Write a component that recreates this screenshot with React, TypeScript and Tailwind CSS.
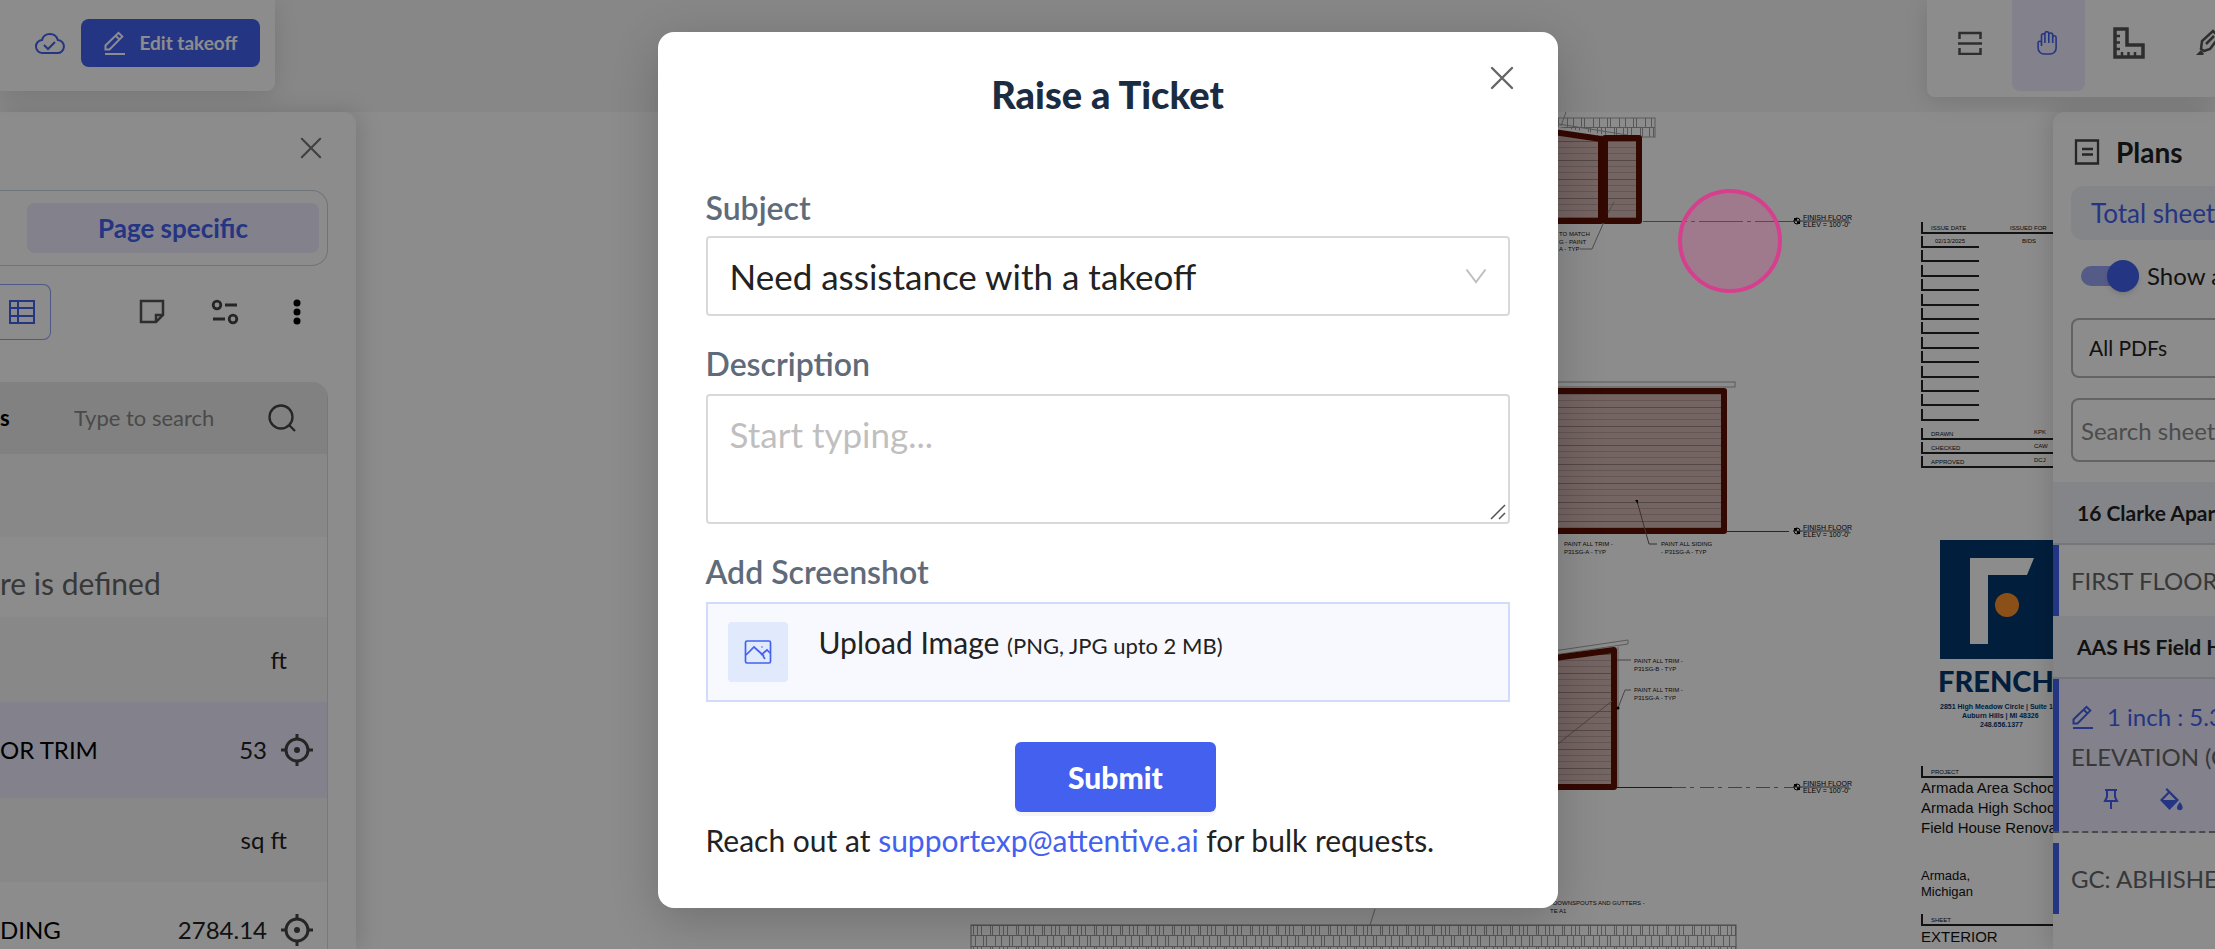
import type { ReactNode } from "react";

const floorMarks = [221, 531, 787];

const issueRows = Array.from({ length: 13 }, (_, i) => Math.round(247 + i * 14.4));

const signOff = [
  { label: "DRAWN", value: "KPK", y: 439 },
  { label: "CHECKED", value: "CAW", y: 453 },
  { label: "APPROVED", value: "DCJ", y: 467 },
];

const notes = [
  { x: 1559, y: 236, text: "TO MATCH" },
  { x: 1559, y: 244, text: "G - PAINT" },
  { x: 1559, y: 251, text: "A - TYP" },
  { x: 1564, y: 546, text: "PAINT ALL TRIM -" },
  { x: 1564, y: 554, text: "P31SG-A - TYP" },
  { x: 1661, y: 546, text: "PAINT ALL SIDING" },
  { x: 1661, y: 554, text: "- P31SG-A - TYP" },
  { x: 1634, y: 663, text: "PAINT ALL TRIM -" },
  { x: 1634, y: 671, text: "P31SG-B - TYP" },
  { x: 1634, y: 692, text: "PAINT ALL TRIM -" },
  { x: 1634, y: 700, text: "P31SG-A - TYP" },
  { x: 1553, y: 905, text: "DOWNSPOUTS AND GUTTERS -" },
  { x: 1550, y: 913, text: "TE A1" },
];

function Drawing() {
  return (
    <svg
      className="absolute inset-0 h-full w-full"
      viewBox="0 112 2215 837"
      preserveAspectRatio="xMaxYMin slice"
      fontFamily="'Liberation Sans', sans-serif"
    >
      <defs>
        <pattern id="siding" width="20" height="19" y="103" patternUnits="userSpaceOnUse">
          <rect width="20" height="19" fill="#d3b7b3" />
          <path d="M0 .5h20M0 6.5h20M0 12.5h20" stroke="#b59d9a" />
          <path d="M0 .5h20" stroke="#958380" />
        </pattern>
        <pattern id="brick" width="26" height="21" x="971" y="925" patternUnits="userSpaceOnUse">
          <path
            d="M0 .5h26M0 10.5h26M2.5 1v9M6.5 1v9M10.5 1v9M19.5 1v9M21.5 1v9M4.5 11v10M12.5 11v10M15.5 11v10M24.5 11v10"
            stroke="#a0a0a0"
            fill="none"
          />
        </pattern>
      </defs>

      {/* upper elevation */}
      <rect x="1540" y="118" width="115" height="19" fill="url(#brick)" stroke="#a5a5a5" />
      <path d="M1540 124l67 11h-10l-57 -4z" fill="#fff" />
      <path d="M1540 121l87 14M1566 112l-5 14" stroke="#a5a5a5" fill="none" />
      <g fill="url(#siding)" stroke="#5d1000" strokeWidth="6" strokeLinejoin="round">
        <path d="M1540 130l61 9v82h-61z" />
        <path d="M1605 138h34v83h-34z" />
      </g>
      <path d="M1580 249h12l11 -25M1608 213l6 -11" stroke="#8b8b8b" fill="none" />

      {/* middle elevation */}
      <rect x="1540" y="382" width="195" height="5" fill="none" stroke="#a5a5a5" />
      <path d="M1540 391h184v140h-184z" fill="url(#siding)" stroke="#5d1000" strokeWidth="6" strokeLinejoin="round" />
      <path d="M1637 501l12 43h8" stroke="#6b5b59" fill="none" />
      <path d="M1635 500l3 0l0 4z" />

      {/* lower elevation */}
      <path d="M1540 653l88 -13v4l-88 13M1618 647v140" fill="none" stroke="#a5a5a5" />
      <path d="M1540 660l74 -10v137h-74z" fill="url(#siding)" stroke="#5d1000" strokeWidth="6" strokeLinejoin="round" />
      <path d="M1540 758l72 -57M1618 708l7 -18h6M1617 660h14" stroke="#8b7b79" fill="none" />
      <circle cx="1618" cy="708" r="1.5" />

      <path d="M1643 221.5h152" stroke="#7a7a7a" strokeDasharray="44 4 4 4" />
      <path d="M1727 531.5h62" stroke="#4a4a4a" />
      <path d="M1617 787.5h55" stroke="#333" />
      <path d="M1672 787.5h122" stroke="#7a7a7a" strokeDasharray="14 4 4 6" />
      {floorMarks.map((y) => (
        <g key={y}>
          <circle cx="1797" cy={y} r="3" fill="#fff" stroke="#000" />
          <path d={`M1797 ${y}v-3h-3v3zM1797 ${y}v3h3v-3z`} />
          <path d={`M1793 ${y}h56`} stroke="#555" />
          <text x="1803" y={y - 1} fontSize="7">FINISH FLOOR</text>
          <text x="1803" y={y + 6} fontSize="7">ELEV = 100'-0"</text>
        </g>
      ))}
      <g fontSize="6" fill="#111">
        {notes.map((n) => (
          <text key={`${n.x}-${n.y}`} x={n.x} y={n.y}>{n.text}</text>
        ))}
      </g>
      <path d="M1375 909l-5 16" stroke="#999" />
      <rect x="971" y="925" width="765" height="40" fill="url(#brick)" stroke="#888" />

      {/* title block */}
      <g fill="none" stroke="#222" strokeWidth="2">
        <path d="M1922 222v11h140" />
        {issueRows.map((y) => (
          <path key={y} d={`M1922 ${y - 11}v11h57`} />
        ))}
        {signOff.map((s) => (
          <path key={s.y} d={`M1922 ${s.y - 11}v11h140`} />
        ))}
        <path d="M1922 766v11h140M1922 914v11h140" />
      </g>
      <g fontSize="6" fill="#111">
        <text x="1931" y="230">ISSUE DATE</text>
        <text x="2010" y="230">ISSUED FOR</text>
        <text x="1935" y="243">02/13/2025</text>
        <text x="2022" y="243">BIDS</text>
        {signOff.map((s) => (
          <g key={s.label}>
            <text x="1931" y={s.y - 3}>{s.label}</text>
            <text x="2034" y={s.y - 5}>{s.value}</text>
          </g>
        ))}
        <text x="1931" y="774">PROJECT</text>
        <text x="1931" y="922">SHEET</text>
      </g>
      <path d="M1940 540h120v119h-120z" fill="#04386f" />
      <path d="M1970 558h64l-7 17h-39v69h-18z" fill="#fff" />
      <circle cx="2007" cy="605" r="12" fill="#fd912c" />
      <g fill="#04386f" fontWeight="700">
        <text x="1938" y="692" fontSize="29" fontWeight="900" fontFamily="Lato, sans-serif">FRENCH</text>
        <text x="1940" y="709" fontSize="7">2851 High Meadow Circle | Suite 100</text>
        <text x="1962" y="718" fontSize="7">Auburn Hills | MI 48326</text>
        <text x="1980" y="727" fontSize="7">248.656.1377</text>
      </g>
      <g fontSize="15" fill="#111">
        <text x="1921" y="793">Armada Area Schools</text>
        <text x="1921" y="813">Armada High School</text>
        <text x="1921" y="833">Field House Renovation</text>
        <text x="1921" y="942">EXTERIOR</text>
      </g>
      <g fontSize="13" fill="#111">
        <text x="1921" y="880">Armada,</text>
        <text x="1921" y="896">Michigan</text>
      </g>
    </svg>
  );
}

function CloseIcon({ className }: { className: string }) {
  return (
    <svg className={className} viewBox="0 0 24 24" fill="none" stroke="currentColor" strokeWidth="2.4" strokeLinecap="round">
      <path d="M2 2l20 20M22 2L2 22" />
    </svg>
  );
}

function PencilIcon({ className }: { className: string }) {
  return (
    <svg className={className} viewBox="0 0 24 24" fill="none" stroke="currentColor" strokeWidth="2">
      <path d="M2 23h20M2.500 18.500v-4L15.500 1.800l3.800 3.800L6.500 18.500zM12.800 4.800l3.600 3.600" />
    </svg>
  );
}

function TargetIcon() {
  return (
    <svg className="size-8" viewBox="0 0 32 32" fill="none" stroke="#444" strokeWidth="3">
      <circle cx="16" cy="16" r="11" />
      <circle cx="16" cy="16" r="3" fill="#444" stroke="none" />
      <path d="M16 0v5M16 27v5M0 16h5M27 16h5" />
    </svg>
  );
}

function Header() {
  return (
    <header className="relative z-10 flex h-28 items-start justify-between">
      <div className="flex h-[91px] items-start gap-4 rounded-br-lg bg-white pt-[19px] pr-[15px] pl-[35px] shadow-[0_4px_24px_rgba(0,0,0,0.12)]">
        <svg className="mt-3 h-6 w-[30px] text-[#4361ee]" viewBox="0 0 30 24" fill="none" stroke="currentColor" strokeWidth="2">
          <path d="M8 22a6.500 6.500 0 0 1-1-13A8.200 8.200 0 0 1 22.800 9a6.500 6.500 0 0 1-.8 13z" />
          <path d="M9 14l4 4 7-7" />
        </svg>
        <button className="flex h-12 w-[179px] items-center justify-center gap-3 rounded-lg bg-[#4361ee] text-[19px] font-bold text-white">
          <PencilIcon className="size-6" />
          Edit takeoff
        </button>
      </div>
      <nav className="flex h-[97px] w-[288px] items-start overflow-hidden rounded-bl-lg bg-white text-[#555] shadow-[0_4px_24px_rgba(0,0,0,0.12)]">
        <button aria-label="Fit to page" className="flex h-[85px] w-[85px] shrink-0 items-center justify-center">
          <svg className="h-6 w-6" viewBox="0 0 24 24" fill="none" stroke="currentColor" strokeWidth="2.500">
            <path d="M1.500 8V2h21v6M0 12.500h24M1.500 17v6h21v-6" />
          </svg>
        </button>
        <button aria-label="Pan" className="flex h-[91px] w-[73px] shrink-0 items-center justify-center rounded-b-lg bg-[#edecff] pr-1 pb-1.5 text-[#4361ee]">
          <svg className="h-6 w-5" viewBox="0 0 20 24" fill="none" stroke="currentColor" strokeWidth="1.600">
            <path d="M4.500 15V12a1.700 1.700 0 0 0-3.400 0v5a6 6 0 0 0 6 6h6a6 6 0 0 0 6-6V6.500a1.700 1.700 0 0 0-3.400 0V12M4.500 14V4.500a1.700 1.700 0 0 1 3.400 0V12M7.900 11V2.600a1.700 1.700 0 0 1 3.900 0V12M11.800 4a1.900 1.900 0 0 1 3.900 0v8" />
          </svg>
        </button>
        <button aria-label="Measure" className="flex h-[85px] w-[88px] shrink-0 items-center justify-center">
          <svg className="size-8" viewBox="0 0 32 32" fill="none" stroke="currentColor" strokeWidth="3.500">
            <path d="M2 2h12v16h16v12H2z" />
            <path d="M2 9h5M2 15.500h5M2 22h5M9 30v-5M15.500 30v-5M22 30v-5" strokeWidth="2.500" />
          </svg>
        </button>
        <button aria-label="Draw" className="flex h-[85px] w-[72px] shrink-0 items-center justify-center">
          <svg className="size-7" viewBox="0 0 28 28" fill="none" stroke="currentColor" strokeWidth="2.500">
            <path d="M6 20l1-8 11-10 6 6-9 12-6 2zM11 15l8-8" />
            <path d="M1 26l5-5 3 4-1 1z" fill="currentColor" stroke="none" />
          </svg>
        </button>
      </nav>
    </header>
  );
}

function TakeoffRow({ name, value, icon, className }: { name?: string; value?: string; icon?: boolean; className: string }) {
  return (
    <tr className={className}>
      <td className="p-0 text-black">{name}</td>
      <td className={icon ? "p-0 pr-[14px]" : "p-0 pr-10"}>
        <div className="flex items-center justify-end gap-3.5">
          {value}
          {icon && <TargetIcon />}
        </div>
      </td>
    </tr>
  );
}

function TakeoffPanel() {
  return (
    <aside className="relative flex w-[356px] flex-col overflow-hidden rounded-tr-xl bg-white pt-[25px] pr-7 text-2xl text-black shadow-[4px_0_24px_rgba(0,0,0,0.14)]">
      <button aria-label="Close panel" className="mr-1.5 self-end text-[#777]">
        <CloseIcon className="size-[22px]" />
      </button>
      <div className="mt-[31px] h-[76px] rounded-r-2xl border border-l-0 border-[#cbd3da] py-3 pr-2 pl-[27px]">
        <button className="h-full w-full rounded-lg bg-[#edecff] text-[26px] leading-8 font-bold text-[#4361ee]">Page specific</button>
      </div>
      <div className="mt-[18px] flex h-14 items-center">
        <button aria-label="Table view" className="flex h-full w-[51px] items-center rounded-r-lg border border-l-0 border-[#8fa0f5] pl-2 text-[#4361ee]">
          <svg className="h-[26px] w-7" viewBox="0 0 28 26" fill="none" stroke="currentColor" strokeWidth="2">
            <path d="M2 2h24v22H2zM10 2v22M2 9h24M2 17h24" />
          </svg>
        </button>
        <button aria-label="Notes" className="ml-[88px] text-[#555]">
          <svg className="size-[26px]" viewBox="0 0 26 26" fill="none" stroke="currentColor" strokeWidth="2.500">
            <path d="M2 2h22v14l-7 7H2zM24 16h-7v7" />
          </svg>
        </button>
        <button aria-label="Filters" className="ml-[46px] text-[#444]">
          <svg className="h-[26px] w-7" viewBox="0 0 28 26" fill="none" stroke="currentColor" strokeWidth="2.800">
            <circle cx="6" cy="6" r="3.800" />
            <path d="M14 6h12M2 20h12" />
            <circle cx="22" cy="20" r="3.800" />
          </svg>
        </button>
        <button aria-label="More" className="ml-[54px]">
          <svg className="h-[26px] w-2" viewBox="0 0 8 26">
            <circle cx="4" cy="4" r="3.500" />
            <circle cx="4" cy="13" r="3.500" />
            <circle cx="4" cy="22" r="3.500" />
          </svg>
        </button>
      </div>
      <div className="mt-[42px] flex-1 overflow-hidden rounded-tr-2xl border-r border-[#dcdcdc]">
        <div className="flex h-[72px] items-center bg-[#ebebeb]">
          <span className="w-3 text-[22px] font-bold">s</span>
          <input aria-label="Search features" placeholder="Type to search" className="ml-[62px] w-[180px] bg-transparent text-[22px] outline-none placeholder:text-[#888]" />
          <svg className="ml-3.5 size-7 text-[#444]" viewBox="0 0 28 28" fill="none" stroke="currentColor" strokeWidth="2.300">
            <circle cx="13" cy="13" r="11.500" />
            <path d="M21 21l6 6" />
          </svg>
        </div>
        <table className="w-full border-collapse text-[#222]">
          <tbody>
            <TakeoffRow className="h-[83px] bg-[#f7f7f7]" />
            <tr className="h-20">
              <td colSpan={2} className="p-0 pt-3 text-[30px] leading-9 text-[#666]">re is defined</td>
            </tr>
            <TakeoffRow className="h-[85px] bg-[#f7f7f7]" value="ft" />
            <TakeoffRow className="h-24 bg-[#edecff]" name="OR TRIM" value="53" icon />
            <TakeoffRow className="h-[84px] bg-[#f7f7f7]" value="sq ft" />
            <TakeoffRow className="h-24" name="DING" value="2784.14" icon />
          </tbody>
        </table>
      </div>
    </aside>
  );
}

function SheetGroup({ children }: { children: ReactNode }) {
  return <h3 className="flex h-[63px] items-center border-b-2 border-[#d5d8de] bg-[#f0f2fa] pl-6 text-[21px] font-bold whitespace-nowrap">{children}</h3>;
}

function PlansPanel() {
  return (
    <aside className="relative w-[162px] overflow-hidden rounded-tl-xl bg-white text-2xl whitespace-nowrap text-[#222] shadow-[-4px_0_24px_rgba(0,0,0,0.14)]">
      <h2 className="mt-5 flex items-center gap-4 pl-[21px] text-[28px] leading-10 font-bold">
        <svg className="size-[26px] text-[#444]" viewBox="0 0 26 26" fill="none" stroke="currentColor" strokeWidth="2.300">
          <path d="M2 1.500h22v23H2zM8 10h11M8 15.500h11" />
        </svg>
        Plans
      </h2>
      <p className="mt-3.5 ml-[18px] flex h-[54px] items-center rounded-l-xl bg-[#f0f3fa] pl-5 text-[26px] text-[#4361ee]">Total sheets</p>
      <label className="mt-5 ml-7 flex h-8 items-center gap-2">
        <input type="checkbox" role="switch" defaultChecked className="peer sr-only" />
        <span className="flex h-5 w-[58px] shrink-0 items-center justify-end rounded-full bg-[#98a6f5]">
          <span className="size-8 rounded-full bg-[#4361ee] shadow-md" />
        </span>
        Show all
      </label>
      <select aria-label="PDF filter" className="mt-[26px] ml-[18px] block h-[60px] w-[220px] appearance-none rounded-lg border-2 border-[#b4b4b4] bg-white pl-4 text-[21px]">
        <option>All PDFs</option>
      </select>
      <input aria-label="Search sheets" placeholder="Search sheets" className="mt-5 mb-5 ml-[18px] block h-16 w-[220px] rounded-lg border-2 border-[#b4b4b4] pl-2 placeholder:text-[#8b8b8b]" />
      <SheetGroup>16 Clarke Apartments</SheetGroup>
      <div className="flex h-[71px] items-center border-l-[6px] border-[#4361ee] pl-3 text-[#666]">FIRST FLOOR</div>
      <SheetGroup>AAS HS Field House</SheetGroup>
      <div className="h-[154px] border-b-2 border-b-[#888] border-dashed bg-[#edecff]">
        <div className="h-full border-l-[6px] border-[#4361ee] pt-4 pl-3 text-[#4361ee]">
          <div className="flex h-11 items-center gap-3">
            <PencilIcon className="size-6 shrink-0" />1 inch : 5.33
          </div>
          <div className="leading-9 text-[#666]">ELEVATION (C</div>
          <div className="mt-3 flex items-center gap-10 pl-8">
            <svg className="h-[22px] w-4 shrink-0" viewBox="0 0 16 22" fill="none" stroke="currentColor" strokeWidth="2">
              <path d="M2 2h12M4 2v7l-2 4h12l-2-4V2M8 13v8" />
            </svg>
            <svg className="size-6 shrink-0" viewBox="0 0 24 24" fill="currentColor">
              <path d="M8 1l-1.500 1.500 2.400 2.400L1 13l9.500 10L20 13zM10.300 6.500L16.500 13H4z" fillRule="evenodd" />
              <path d="M21 15s-3 3.500-3 5.500a2.800 2.800 0 0 0 5.600 0c0-2-2.600-5.500-2.600-5.500z" />
            </svg>
          </div>
        </div>
      </div>
      <div className="mt-2.5 flex h-[71px] items-center border-l-[6px] border-[#4361ee] pl-3 text-[#666]">GC: ABHISHEK</div>
    </aside>
  );
}

function TicketDialog() {
  return (
    <form
      role="dialog"
      aria-label="Raise a Ticket"
      className="relative h-fit w-full max-w-[900px] rounded-2xl bg-white px-12 pt-10 pb-[50px] text-3xl leading-9 text-[#222] shadow-[0_12px_48px_rgba(0,0,0,0.2)]"
    >
      <button type="button" aria-label="Close" className="absolute top-[34px] right-11 text-[#666]">
        <CloseIcon className="size-6" />
      </button>
      <h1 className="text-center text-[38px] leading-[44px] font-black text-[#1b2b41]">Raise a Ticket</h1>

      <label htmlFor="subject" className="mt-[72px] block text-[32px] leading-10 font-semibold text-[#5f6b7a]">Subject</label>
      <div className="relative mt-2">
        <select id="subject" className="h-20 w-full appearance-none rounded-sm border-2 border-[#d9d9d9] bg-white pl-[22px] text-[35px]">
          <option>Need assistance with a takeoff</option>
        </select>
        <svg className="pointer-events-none absolute top-8 right-[22px] h-4 w-6" viewBox="0 0 24 16" fill="none" stroke="#bfbfbf" strokeWidth="2">
          <path d="M2.500 1.500L12 14l9.500-12.500" />
        </svg>
      </div>

      <label htmlFor="description" className="mt-7 block text-[32px] leading-10 font-semibold text-[#5f6b7a]">Description</label>
      <div className="relative mt-2.5">
        <textarea
          id="description"
          placeholder="Start typing..."
          className="block h-[130px] w-full resize-none rounded-sm border-2 border-[#d9d9d9] px-[22px] py-4 text-[35px] leading-[44px] placeholder:text-[#bfbfbf]"
        />
        <svg className="pointer-events-none absolute right-1 bottom-1 size-4" viewBox="0 0 16 16" stroke="#555" strokeWidth="1.500">
          <path d="M1 15L15 1M9 15l6-6" />
        </svg>
      </div>

      <label htmlFor="screenshot" className="mt-7 block text-[32px] leading-10 font-semibold text-[#5f6b7a]">Add Screenshot</label>
      <label htmlFor="screenshot" className="mt-2.5 flex h-[100px] items-center border-2 border-[#d3dbfb] bg-[#f8f9fe] pl-5">
        <input id="screenshot" type="file" className="sr-only" />
        <span className="flex size-15 items-center justify-center rounded bg-[#e1eafc] text-[#4361ee]">
          <svg className="size-7" viewBox="0 0 28 28" fill="none" stroke="currentColor" strokeWidth="1.700">
            <rect x="1.500" y="3" width="25" height="22" rx="1.500" />
            <path d="M2 17l8-8 10 9 M17 17l6-5 3 3M19 18l2 3" />
            <circle cx="18" cy="9" r=".8" fill="currentColor" stroke="none" />
          </svg>
        </span>
        <span className="mb-4 ml-[31px]">
          Upload Image <span className="text-[22px]">(PNG, JPG upto 2 MB)</span>
        </span>
      </label>

      <div className="mt-10 flex justify-center pl-4">
        <button type="submit" className="h-[70px] w-[201px] rounded-md bg-[#4361ee] font-black text-white shadow-[0_4px_0_rgba(0,0,0,0.04)]">
          Submit
        </button>
      </div>
      <p className="mt-2.5">
        Reach out at <a href="mailto:supportexp@attentive.ai" className="text-[#4361ee]">supportexp@attentive.ai</a> for bulk requests.
      </p>
    </form>
  );
}

export default function App() {
  return (
    <div className="relative flex h-screen flex-col overflow-hidden bg-[#f6f6f6] font-[Lato,sans-serif]">
      <Header />
      <main className="relative flex min-h-0 flex-1 justify-between bg-white">
        <Drawing />
        <TakeoffPanel />
        <PlansPanel />
      </main>
      <div className="absolute inset-0 z-20 flex justify-center bg-black/45 pt-8">
        <TicketDialog />
      </div>
      {/* click highlight */}
      <div className="pointer-events-none absolute top-[189px] left-[1678px] z-30 size-[104px] rounded-full border-4 border-[#d63f8d] bg-[#d63f8d]/25" />
    </div>
  );
}
